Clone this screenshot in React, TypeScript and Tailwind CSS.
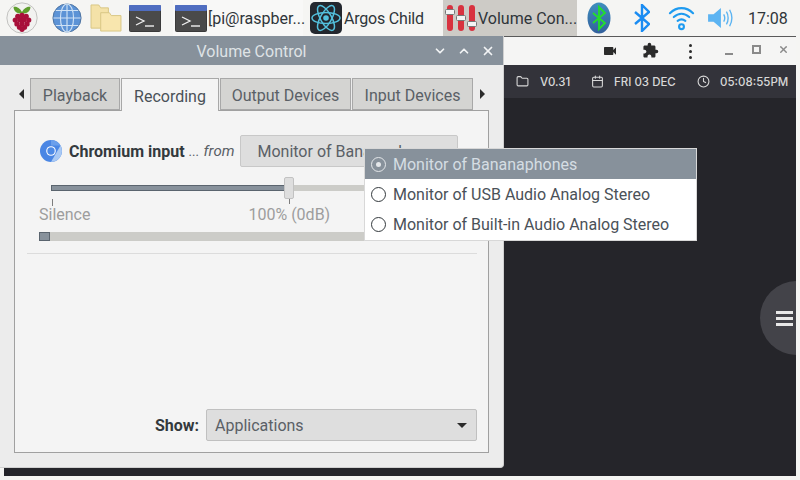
import { Calendar, ChevronDown, ChevronUp, Clock, Folder, X } from 'lucide-react';
import { MdExtension, MdVideocam } from 'react-icons/md';

// ─── taskbar icons ───
function RaspberryIcon() {
  const berries = [[14, 17], [19, 16], [24, 17], [11, 21.500], [16.500, 21], [21.500, 21], [27, 21.500], [13, 26], [19, 25.500], [25, 26], [16, 30], [22, 30], [19, 32.500]];
  return (
    <svg width="32" height="32" viewBox="0 0 38 38" className="shrink-0">
      <circle cx="19" cy="19" r="18" fill="#f2f2f0" stroke="#b9b9b6" />
      <path d="M19 12C16 6 11 5 9 6c0 5 4 8 10 8 6 0 10-3 10-8-2-1-7 0-10 6z" fill="#5f9e2e" />
      {berries.map(([x, y]) => (
        <circle key={`${x}-${y}`} cx={x} cy={y} r="3.100" fill="#a8103a" />
      ))}
    </svg>
  );
}

function GlobeIcon() {
  return (
    <svg width="30" height="30" viewBox="0 0 32 32" className="shrink-0">
      <circle cx="16" cy="16" r="15" fill="#5c93d6" stroke="#4a6f9c" />
      <g fill="none" stroke="#cfe2f5" strokeWidth="1.200">
        <ellipse cx="16" cy="16" rx="7" ry="15" />
        <path d="M16 1v30M1.500 16h29M4 8h24M4 24h24" />
      </g>
    </svg>
  );
}

function FoldersIcon() {
  return (
    <svg width="32" height="28" viewBox="0 0 33 29" className="shrink-0">
      <path d="M1 1h8l2 3h8v21H1z" fill="#f4e2a8" stroke="#d8c684" />
      <path d="M11 9h9l2 3h10v16H11z" fill="#f8e6ae" stroke="#d8c684" />
    </svg>
  );
}

function TerminalIcon() {
  return (
    <svg width="32" height="27" viewBox="0 0 32 27" className="shrink-0">
      <rect x="0.500" y="0.500" width="31" height="26" rx="1" fill="#4a4a4a" stroke="#3a3a3a" />
      <rect x="0" y="0" width="32" height="6" rx="1" fill="#4f6dc0" />
      <path d="M7 12l8 4-8 4" fill="none" stroke="#f0f0f0" strokeWidth="1.300" />
      <path d="M16 21h9" stroke="#f0f0f0" strokeWidth="1.400" />
    </svg>
  );
}

function ReactIcon() {
  return (
    <svg width="32" height="32" viewBox="0 0 32 32" className="shrink-0">
      <rect width="32" height="32" rx="5" fill="#23272e" />
      <g fill="none" stroke="#53c1de" strokeWidth="1.500">
        <ellipse cx="16" cy="16" rx="14" ry="5.500" />
        <ellipse cx="16" cy="16" rx="14" ry="5.500" transform="rotate(60 16 16)" />
        <ellipse cx="16" cy="16" rx="14" ry="5.500" transform="rotate(120 16 16)" />
      </g>
      <circle cx="16" cy="16" r="2.800" fill="#53c1de" />
    </svg>
  );
}

function MixerIcon() {
  return (
    <svg width="32" height="26" viewBox="0 0 32 26" className="shrink-0">
      <rect x="2" y="0" width="6" height="26" rx="3" fill="#d8323f" />
      <rect x="13" y="0" width="6" height="26" rx="3" fill="#d8323f" />
      <rect x="24" y="0" width="6" height="26" rx="3" fill="#d8323f" />
      <rect x="0.500" y="4.500" width="9" height="5" rx="1" fill="#f4f4f4" stroke="#777" />
      <rect x="11.500" y="10.500" width="9" height="5" rx="1" fill="#f4f4f4" stroke="#777" />
      <rect x="22.500" y="16.500" width="9" height="5" rx="1" fill="#f4f4f4" stroke="#777" />
    </svg>
  );
}

function BluetoothOval() {
  return (
    <svg width="24" height="32" viewBox="0 0 24 32" className="shrink-0">
      <defs>
        <linearGradient id="oval" x1="0" y1="0" x2="0" y2="1">
          <stop offset="0" stopColor="#3f8fbf" />
          <stop offset="1" stopColor="#33609c" />
        </linearGradient>
      </defs>
      <ellipse cx="12" cy="16" rx="11.500" ry="15.500" fill="url(#oval)" />
      <path d="M6 11l12 10-6 6V5l6 6-12 10" fill="none" stroke="#22e02a" strokeWidth="1.800" />
    </svg>
  );
}

function BluetoothIcon() {
  return (
    <svg width="16" height="28" viewBox="0 0 16 28" className="shrink-0">
      <path d="M1 8l14 12-7 7V1l7 7L1 20" fill="none" stroke="#1a8cf2" strokeWidth="2.400" />
    </svg>
  );
}

function WifiIcon() {
  return (
    <svg width="27" height="28" viewBox="0 0 28 28" className="shrink-0">
      <g fill="none" stroke="#1e9bf0" strokeWidth="2.200" strokeLinecap="round">
        <path d="M2 9c7-7 17-7 24 0" />
        <path d="M6 13c5-4.500 11-4.500 16 0" />
        <path d="M10 17c2.500-2 5.500-2 8 0" />
        <circle cx="14" cy="23" r="2.500" />
      </g>
    </svg>
  );
}

function SpeakerIcon() {
  return (
    <svg width="26" height="22" viewBox="0 0 28 24" className="shrink-0">
      <path d="M1 8h6l8-7v22l-8-7H1z" fill="#5cb4f2" />
      <g fill="none" stroke="#5cb4f2" strokeWidth="1.500">
        <path d="M18 8c1.500 2.500 1.500 5.500 0 8" />
        <path d="M21 5c2.500 4 2.500 10 0 14" />
        <path d="M24.500 3c3 5.500 3 12.500 0 18" />
      </g>
    </svg>
  );
}

function ChromiumIcon() {
  return (
    <svg width="22" height="22" viewBox="0 0 22 22" className="shrink-0">
      <circle cx="11" cy="11" r="11" fill="#4a86e4" />
      <path d="M11 0a11 11 0 0 1 9.500 5.500H11z" fill="#6a9fec" />
      <path d="M20.500 5.500A11 11 0 0 1 11 22l4-7z" fill="#a9c9f4" />
      <circle cx="11" cy="11" r="4.800" fill="#fff" />
      <circle cx="11" cy="11" r="3.700" fill="#4d8ae6" />
    </svg>
  );
}

function Radio({ checked }: { checked?: boolean }) {
  return (
    <span className={`flex h-[15px] w-[15px] shrink-0 items-center justify-center rounded-full border ${checked ? 'border-[#e4e7ea]' : 'border-[#33393d]'}`}>
      {checked && <span className="h-[5px] w-[5px] rounded-full bg-[#e4e7ea]" />}
    </span>
  );
}

function Tab({ label, active, width }: { label: string; active?: boolean; width: string }) {
  return (
    <div className={`flex items-center justify-center border border-[#a8a8a8] pt-[3px] ${width} ${active ? 'z-10 h-[33px] border-b-0 bg-[#f4f4f4] text-[#4a5158]' : 'h-[32px] bg-[#d4d4d2] text-[#5a6066]'}`}>
      {label}
    </div>
  );
}

const menuItems = ['Monitor of Bananaphones', 'Monitor of USB Audio Analog Stereo', 'Monitor of Built-in Audio Analog Stereo'];

export default function App() {
  return (
    <div className="flex h-[480px] w-[800px] flex-col overflow-hidden bg-[#f5f5f3] text-[16px] text-[#33393d] [font-family:Roboto,sans-serif]">
      {/* ─── Taskbar ─── */}
      <div className="flex h-9 shrink-0 items-center whitespace-nowrap">
        <div className="ml-[6px] flex w-[167px] items-center">
          <RaspberryIcon />
          <div className="ml-[14px]"><GlobeIcon /></div>
          <div className="ml-[8px]"><FoldersIcon /></div>
          <div className="ml-[7px]"><TerminalIcon /></div>
        </div>
        <div className="flex h-full w-[130px] items-center bg-[#f8f8f7] pl-[2px] text-[#2f353a]">
          <TerminalIcon />
          <span className="ml-[1px] pt-[1px]">[pi@raspber...</span>
        </div>
        <div className="ml-[7px] flex h-full w-[133px] items-center">
          <ReactIcon />
          <span className="ml-[2px] pt-[1px] tracking-[-0.2px] text-[#2f353a]">Argos Child</span>
        </div>
        <div className="flex h-full w-[134px] items-center bg-[#cdcbc6] pl-[2px] text-[#2f353a]">
          <MixerIcon />
          <span className="ml-[1px] pt-[1px]">Volume Con...</span>
        </div>
        <div className="ml-[10px]"><BluetoothOval /></div>
        <div className="ml-[23px]"><BluetoothIcon /></div>
        <div className="ml-[18px]"><WifiIcon /></div>
        <div className="ml-[12px]"><SpeakerIcon /></div>
        <span className="ml-[15px] pt-[1px] text-[#2f353a]">17:08</span>
      </div>

      {/* ─── Desktop ─── */}
      <div className="relative flex-1 pb-1 pr-1 pl-[4px]">
        {/* browser window behind */}
        <div className="flex h-full flex-col overflow-hidden bg-[#25252a]">
          <div className="flex h-[29px] shrink-0 items-center border-t border-[#5a5a5a] bg-[#f5f5f4] text-[#2b2b2b]">
            <div className="relative h-full w-full">
              <MdVideocam className="absolute left-[598px] top-[6px] text-[16px]" />
              <MdExtension className="absolute left-[638px] top-[5px] text-[17px]" />
              <div className="absolute left-[685px] top-[7px] flex flex-col gap-[3px]">
                <span className="h-[3px] w-[3px] rounded-full bg-[#2b2b2b]" />
                <span className="h-[3px] w-[3px] rounded-full bg-[#2b2b2b]" />
                <span className="h-[3px] w-[3px] rounded-full bg-[#2b2b2b]" />
              </div>
              <span className="absolute left-[721px] top-[16px] h-[2px] w-[8px] bg-[#8a8a8a]" />
              <span className="absolute left-[748px] top-[8px] h-[9px] w-[9px] border-2 border-[#8a8a8a]" />
              <X size={11} strokeWidth={3} className="absolute left-[774px] top-[7px] text-[#8a8a8a]" />
            </div>
          </div>
          <div className="relative h-[33px] shrink-0 bg-[#33333a] text-[11.5px] font-medium text-[#d8d8d8] [font-family:Inter,sans-serif]">
            <Folder size={13} className="absolute left-[512px] top-[10px]" />
            <span className="absolute left-[536px] top-[9px]">V0.31</span>
            <Calendar size={13} className="absolute left-[587px] top-[10px]" />
            <span className="absolute left-[610px] top-[9px]">FRI 03 DEC</span>
            <Clock size={13} className="absolute left-[693px] top-[10px]" />
            <span className="absolute left-[716px] top-[9px]">05:08:55PM</span>
          </div>
          <div className="relative flex-1">
            <div className="absolute left-[756px] top-[183px] flex h-[74px] w-[74px] flex-col justify-center gap-[3px] rounded-full bg-[#434349] pl-[16px]">
              <span className="h-[3px] w-[17px] bg-[#e8e8e8]" />
              <span className="h-[3px] w-[17px] bg-[#e8e8e8]" />
              <span className="h-[3px] w-[17px] bg-[#e8e8e8]" />
            </div>
          </div>
        </div>

        {/* Volume Control window */}
        <div className="absolute left-0 top-0 flex h-[432px] w-[504px] flex-col rounded-br-sm border-r border-b border-[#d0d0d0] bg-[#ececec]">
          <div className="relative flex h-[29px] shrink-0 items-center justify-center bg-[#87919b] pt-[3px] text-[#dfe3e6]">
            <span>Volume Control</span>
            <div className="absolute right-[8px] top-[8px] flex gap-[10px] text-[#f2f4f5]">
              <ChevronDown size={14} strokeWidth={3} />
              <ChevronUp size={14} strokeWidth={3} />
              <X size={14} strokeWidth={3} />
            </div>
          </div>

          <div className="flex flex-1 flex-col px-[14px] pb-[14px] pt-[13px]">
            {/* tabs */}
            <div className="relative flex h-[32px] shrink-0 items-start gap-[1px] pl-[16px]">
              <span className="absolute left-[5px] top-[11px] h-0 w-0 border-y-[5px] border-r-[5px] border-y-transparent border-r-[#2b2b2b]" />
              <Tab label="Playback" width="w-[90px]" />
              <Tab label="Recording" width="w-[98px]" active />
              <Tab label="Output Devices" width="w-[131px]" />
              <Tab label="Input Devices" width="w-[121px]" />
              <span className="absolute left-[466px] top-[11px] h-0 w-0 border-y-[5px] border-l-[5px] border-y-transparent border-l-[#2b2b2b]" />
            </div>

            {/* recording page */}
            <div className="flex flex-1 flex-col border border-[#a0a0a0] bg-[#f4f4f4] pl-[12px] pr-[11px]">
              <div className="ml-[13px] mt-[24px] flex h-[32px] items-center">
                <ChromiumIcon />
                <span className="ml-[7px] pt-[1px] font-bold">Chromium input</span>
                <span className="ml-[4px] w-[10px] pt-[1px] text-[13px] text-[#5a6066]">...</span>
                <span className="ml-[5px] pt-[1px] text-[15px] italic text-[#5a6066]">from</span>
                <div className="ml-[6px] flex h-[32px] w-[218px] items-center rounded-[2px] border border-[#c8c8c8] bg-[#dedede] pl-[16px] pt-[1px] text-[#5a6066]">
                  Monitor of Bananaphones
                </div>
              </div>

              <div className="relative mt-[10px] h-[22px] w-[440px]">
                <div className="absolute left-[24px] right-0 top-[8px] h-[6px] bg-[#ccccc8]" />
                <div className="absolute left-[24px] top-[8px] h-[6px] w-[234px] border border-[#5a646e] bg-[#87919b]" />
                <div className="absolute left-[257px] top-0 h-[22px] w-[10px] rounded-[2px] border border-[#c2c2c2] bg-[#dedede]" />
              </div>
              <div className="relative h-[6px] w-[440px]">
                <span className="absolute left-[25px] top-0 h-[7px] w-px bg-[#7d7d7d]" />
                <span className="absolute left-[262px] top-0 h-[5px] w-px bg-[#7d7d7d]" />
              </div>
              <div className="flex h-[19px] items-center text-[#9d9d9d]">
                <span className="ml-[12px]">Silence</span>
                <span className="ml-[158px]">100% (0dB)</span>
              </div>
              <div className="ml-[12px] mt-[8px] h-[9px] w-[424px] bg-[#ccccc8]">
                <div className="h-full w-[11px] border border-[#5a646e] bg-[#87919b]" />
              </div>
              <div className="mt-[12px] h-px bg-[#dcdcdc]" />

              <div className="mb-[11px] mt-auto flex items-center justify-end">
                <span className="pt-[1px] font-bold">Show:</span>
                <div className="ml-[7px] flex h-[32px] w-[271px] items-center justify-between rounded-[2px] border border-[#c0c0c0] bg-[#dedede] pl-[8px] pr-[9px] pt-[1px] text-[#5a6066]">
                  Applications
                  <span className="h-0 w-0 border-x-[5px] border-t-[5px] border-x-transparent border-t-[#2b2b2b]" />
                </div>
              </div>
            </div>
          </div>
        </div>

        {/* source dropdown */}
        <div className="absolute left-[364px] top-[112px] z-20 w-[333px] border border-[#d8d8d8] bg-white pb-[1px]">
          {menuItems.map((item, i) => (
            <div key={item} className={`flex h-[30px] items-center gap-[7px] pl-[6px] ${i === 0 ? 'bg-[#87919b] text-[#d5dde3]' : 'text-[#4a5158]'}`}>
              <Radio checked={i === 0} />
              <span className="pt-[1px]">{item}</span>
            </div>
          ))}
        </div>
      </div>
    </div>
  );
}
